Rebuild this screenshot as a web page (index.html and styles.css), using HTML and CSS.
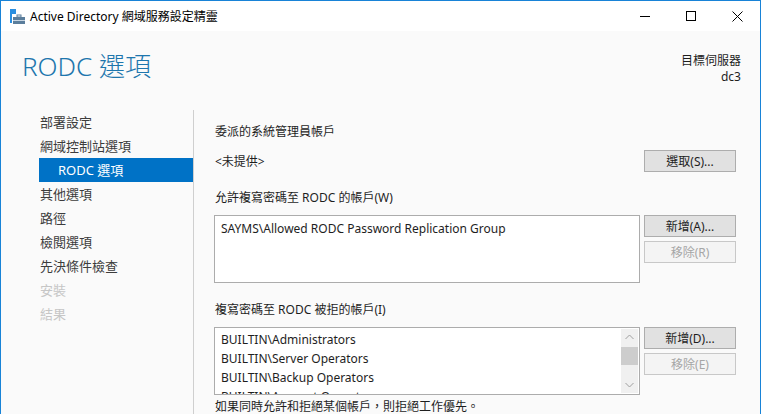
FILE: index.html
```html
<!DOCTYPE html>
<html lang="zh-Hant">
<head>
<meta charset="utf-8">
<title>Active Directory 網域服務設定精靈</title>
<link rel="stylesheet" href="styles.css">
</head>
<body>
<div class="window">
  <div class="titlebar">
    <svg class="app-icon" width="16" height="16" viewBox="0 0 16 16">
      <rect x="0" y="0" width="6" height="5" fill="#2b8fe0"/>
      <rect x="0" y="5" width="2" height="9" fill="#2b8fe0"/>
      <rect x="7" y="6" width="4" height="2" fill="none" stroke="#5b7e9c" stroke-width="1"/>
      <rect x="3" y="8" width="12" height="7" fill="#5b7e9c"/>
      <rect x="3" y="11" width="12" height="1" fill="#c9d6e2"/>
    </svg>
    <span class="title-text">Active Directory 網域服務設定精靈</span>
    <div class="controls">
      <span class="ctl"><svg width="10" height="10" viewBox="0 0 10 10"><line x1="0" y1="5.5" x2="10" y2="5.5" stroke="#000" stroke-width="1"/></svg></span>
      <span class="ctl"><svg width="10" height="10" viewBox="0 0 10 10"><rect x="0.5" y="0.5" width="9" height="9" fill="none" stroke="#000" stroke-width="1"/></svg></span>
      <span class="ctl"><svg width="11" height="11" viewBox="0 0 11 11"><path d="M0.5 0.5 L10.5 10.5 M10.5 0.5 L0.5 10.5" stroke="#000" stroke-width="1"/></svg></span>
    </div>
  </div>
  <div class="main">
    <div class="header">
      <h1 class="page-title">RODC 選項</h1>
      <div class="server">
        <div>目標伺服器</div>
        <div>dc3</div>
      </div>
    </div>
    <div class="body">
      <nav class="nav">
        <div class="nav-item">部署設定</div>
        <div class="nav-item">網域控制站選項</div>
        <div class="nav-item sub selected">RODC 選項</div>
        <div class="nav-item">其他選項</div>
        <div class="nav-item">路徑</div>
        <div class="nav-item">檢閱選項</div>
        <div class="nav-item">先決條件檢查</div>
        <div class="nav-item disabled">安裝</div>
        <div class="nav-item disabled">結果</div>
      </nav>
      <section class="content">
        <div class="label first">委派的系統管理員帳戶</div>
        <div class="row-select">
          <span>&lt;未提供&gt;</span>
          <button class="btn">選取(S)...</button>
        </div>
        <div class="label l2">允許複寫密碼至 RODC 的帳戶(W)</div>
        <div class="list-row">
          <div class="listbox">
            <div class="list-item">SAYMS\Allowed RODC Password Replication Group</div>
          </div>
          <div class="btn-col">
            <button class="btn">新增(A)...</button>
            <button class="btn" disabled>移除(R)</button>
          </div>
        </div>
        <div class="label l3">複寫密碼至 RODC 被拒的帳戶(I)</div>
        <div class="list-row">
          <div class="listbox scroll">
            <div class="items">
              <div class="list-item">BUILTIN\Administrators</div>
              <div class="list-item">BUILTIN\Server Operators</div>
              <div class="list-item">BUILTIN\Backup Operators</div>
              <div class="list-item">BUILTIN\Account Operators</div>
            </div>
            <div class="scrollbar">
              <svg class="arrow" width="17" height="17" viewBox="0 0 17 17"><path d="M4.5 10 L8.5 6 L12.5 10" fill="none" stroke="#a0a0a0" stroke-width="1"/></svg>
              <div class="track"><div class="thumb"></div></div>
              <svg class="arrow" width="17" height="17" viewBox="0 0 17 17"><path d="M4.5 7 L8.5 11 L12.5 7" fill="none" stroke="#a0a0a0" stroke-width="1"/></svg>
            </div>
          </div>
          <div class="btn-col">
            <button class="btn">新增(D)...</button>
            <button class="btn" disabled>移除(E)</button>
          </div>
        </div>
        <div class="note">如果同時允許和拒絕某個帳戶，則拒絕工作優先。</div>
      </section>
    </div>
  </div>
</div>
</body>
</html>
```
FILE: styles.css
```css
html, body {
  margin: 0;
  padding: 0;
  background: #fafafa;
}
body {
  font-family: "Noto Sans", "Noto Sans CJK TC", sans-serif;
  font-size: 12px;
  color: #1e1e1e;
}
.window {
  width: 761px;
  height: 414px;
  box-sizing: border-box;
  border: 1px solid #1883d7;
  border-bottom: none;
  overflow: hidden;
  display: flex;
  flex-direction: column;
}
.titlebar {
  height: 30px;
  background: #fff;
  display: flex;
  align-items: center;
  flex: none;
}
.app-icon {
  margin-left: 9px;
  margin-top: 2px;
}
.title-text {
  margin-left: 4px;
  font-size: 12px;
  color: #000;
}
.controls {
  margin-left: auto;
  display: flex;
  height: 100%;
}
.ctl {
  width: 46px;
  display: flex;
  align-items: center;
  justify-content: center;
}
.main {
  flex: 1;
  background: #fafafa;
  display: flex;
  flex-direction: column;
  min-height: 0;
}
.header {
  height: 79px;
  display: flex;
  justify-content: space-between;
  align-items: flex-start;
  padding: 0 19px 0 21px;
  flex: none;
}
.page-title {
  margin: 18px 0 0;
  font-size: 26px;
  font-weight: 300;
  color: #1d76ad;
  line-height: 34px;
}
.server {
  margin-top: 22px;
  text-align: right;
  font-size: 12px;
  line-height: 16px;
  color: #1e1e1e;
}
.body {
  flex: 1;
  display: flex;
  min-height: 0;
}
.nav {
  width: 154px;
  padding-left: 38px;
  border-right: 1px solid #cfcfcf;
  flex: none;
}
.nav-item {
  height: 24px;
  line-height: 24px;
  font-size: 13px;
  color: #3c3c3c;
  padding-left: 1px;
}
.nav-item.sub {
  padding-left: 19px;
}
.nav-item.selected {
  background: #0072c6;
  color: #fff;
}
.nav-item.disabled {
  color: #c6c6c6;
}
.content {
  flex: 1;
  padding: 0 24px 0 20px;
  min-width: 0;
}
.label {
  height: 16px;
  line-height: 16px;
  padding-left: 1px;
}
.label.first {
  margin-top: 14px;
}
.label.l2 {
  margin-top: 18px;
}
.label.l3 {
  margin-top: 19px;
}
.row-select {
  margin-top: 10px;
  display: flex;
  justify-content: space-between;
  align-items: center;
  padding-left: 1px;
}
.btn {
  width: 92px;
  height: 22px;
  box-sizing: border-box;
  border: 1px solid #adadad;
  background: #e1e1e1;
  font-family: inherit;
  font-size: 12px;
  color: #1e1e1e;
  padding: 0;
}
.btn:disabled {
  background: #f4f4f4;
  border-color: #c8c8c8;
  color: #a6a6a6;
}
.list-row {
  margin-top: 9px;
  display: flex;
  gap: 4px;
}
.btn-col {
  display: flex;
  flex-direction: column;
  gap: 4px;
}
.listbox {
  flex: 1;
  height: 68px;
  box-sizing: border-box;
  border: 1px solid #acacac;
  background: #fff;
  padding: 3px 6px;
  overflow: hidden;
}
.listbox.scroll {
  display: flex;
  padding: 0;
}
.items {
  flex: 1;
  padding: 2px 6px;
  overflow: hidden;
}
.list-item {
  height: 19px;
  line-height: 19px;
  white-space: nowrap;
}
.scrollbar {
  width: 17px;
  margin: 1px;
  background: #f0f0f0;
  display: flex;
  flex-direction: column;
  flex: none;
}
.arrow {
  flex: none;
}
.track {
  flex: 1;
}
.thumb {
  margin-top: 1px;
  height: 18px;
  background: #cdcdcd;
}
.note {
  margin-top: 4px;
  padding-left: 1px;
  line-height: 16px;
  white-space: nowrap;
}
```
